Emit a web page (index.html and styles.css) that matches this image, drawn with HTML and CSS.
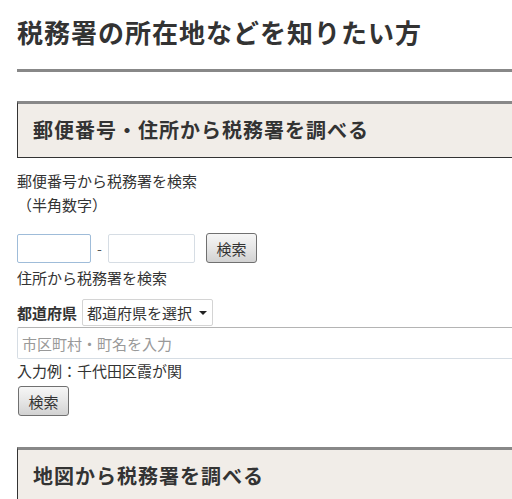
FILE: index.html
```html
<!DOCTYPE html>
<html lang="ja">
<head>
<meta charset="utf-8">
<link rel="stylesheet" href="styles.css">
</head>
<body>
<div class="page">
  <h1 class="title">税務署の所在地などを知りたい方</h1>
  <hr class="rule">
  <section class="section">
    <h2 class="sec-head">郵便番号・住所から税務署を調べる</h2>
    <p class="txt first">郵便番号から税務署を検索</p>
    <p class="txt">（半角数字）</p>
    <div class="zip-row">
      <input class="inp zip1" type="text">
      <span class="dash">-</span>
      <input class="inp zip2" type="text">
      <button class="btn" type="button">検索</button>
    </div>
    <p class="txt addr-label">住所から税務署を検索</p>
    <div class="pref-row">
      <span class="pref-label">都道府県</span>
      <div class="select">都道府県を選択<span class="arrow"></span></div>
    </div>
    <input class="inp city" type="text" placeholder="市区町村・町名を入力">
    <p class="txt">入力例：千代田区霞が関</p>
    <button class="btn btn2" type="button">検索</button>
  </section>
  <section class="section second">
    <h2 class="sec-head">地図から税務署を調べる</h2>
  </section>
</div>
</body>
</html>
```
FILE: styles.css
```css
html, body {
  margin: 0;
  padding: 0;
  overflow: hidden;
  background: #fff;
}
body {
  font-family: "Noto Sans CJK JP", "Noto Sans", sans-serif;
  color: #333;
}
.page {
  width: 620px;
  padding-left: 17px;
  padding-top: 14px;
}
.title {
  margin: 0;
  font-size: 26px;
  line-height: 36px;
  font-weight: bold;
  letter-spacing: 1px;
  color: #333;
}
.rule {
  margin: 19px 0 0;
  border: 0;
  height: 3px;
  background: #888;
}
.section {
  margin-top: 29px;
}
.section.second {
  margin-top: 31px;
}
.sec-head {
  margin: 0;
  border-top: 3px solid #888;
  border-left: 1px solid #333;
  border-bottom: 1px solid #333;
  background: #f1ede8;
  font-size: 20px;
  line-height: 26px;
  padding: 13px 15px 14px;
  font-weight: bold;
  letter-spacing: 1px;
  color: #333;
}
.txt {
  margin: 0;
  font-size: 15px;
  line-height: 24px;
}
.txt.first {
  margin-top: 11px;
}
.zip-row {
  display: flex;
  align-items: center;
  margin-top: 16px;
}
.inp {
  box-sizing: border-box;
  height: 29px;
  border: 1px solid #d6dde4;
  border-radius: 2px;
  background: #fff;
  font-family: inherit;
  font-size: 15px;
  padding: 0 4px;
  margin: 0;
  outline: none;
}
.zip1 {
  width: 74px;
  border-color: #9fbcd9;
}
.zip2 {
  width: 87px;
}
.dash {
  width: 17px;
  text-align: center;
  font-size: 14px;
  color: #555;
}
.btn {
  box-sizing: border-box;
  height: 30px;
  width: 51px;
  margin-left: 11px;
  border: 1px solid #707070;
  border-radius: 3px;
  background: linear-gradient(#f6f6f6, #e6e6e6 50%, #d2d2d2);
  font-family: inherit;
  font-size: 15px;
  color: #333;
  padding: 0;
}
.addr-label {
  margin-top: 3px;
}
.pref-row {
  display: flex;
  align-items: center;
  margin-top: 9px;
}
.pref-label {
  font-size: 15px;
  font-weight: bold;
  width: 65px;
}
.select {
  box-sizing: border-box;
  height: 27px;
  width: 131px;
  border: 1px solid #d4d4d4;
  border-radius: 2px;
  font-size: 15px;
  line-height: 25px;
  padding-left: 4px;
  position: relative;
}
.arrow {
  position: absolute;
  right: 5px;
  top: 11px;
  width: 0;
  height: 0;
  border-left: 4px solid transparent;
  border-right: 4px solid transparent;
  border-top: 4px solid #222;
}
.city {
  display: block;
  width: 100%;
  height: 32px;
  margin-top: 1px;
  border: 1px solid #d6dde4;
  border-top-color: #b4b4b4;
}
.city::placeholder {
  color: #999;
}
.btn2 {
  display: block;
  margin-left: 1px;
  margin-top: 3px;
}
```
